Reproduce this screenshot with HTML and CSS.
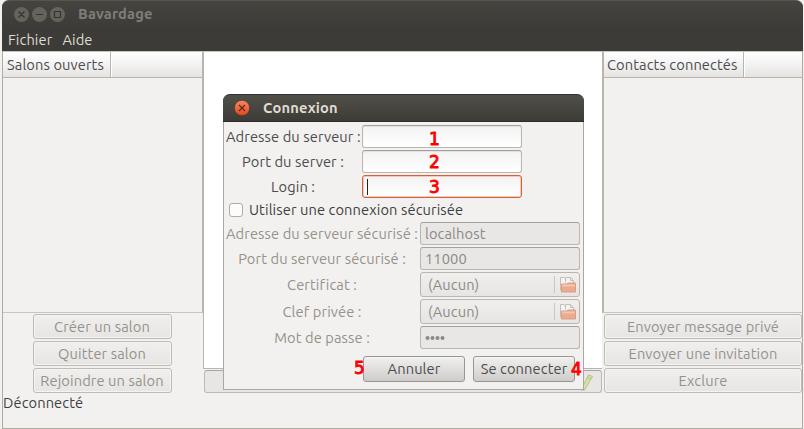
FILE: index.html
```html
<!DOCTYPE html>
<html lang="fr">
<head>
<meta charset="utf-8">
<title>Bavardage</title>
<link rel="stylesheet" href="styles.css">
</head>
<body>
<div class="window">
  <header class="top">
    <div class="titlebar">
      <svg class="controls" width="52" height="16" viewBox="0 0 52 16">
        <g fill="#65635b"><circle cx="7.500" cy="7.500" r="7.500"/><circle cx="25.500" cy="7.500" r="7.500"/><circle cx="43.500" cy="7.500" r="7.500"/></g>
        <g fill="none" stroke="#35342f" stroke-width="1.200"><path d="M4.500 4.500l6 6M10.500 4.500l-6 6M22 7.500h7"/><path d="M40.500 4.500h6v6h-6z"/></g>
      </svg>
      <span class="title">Bavardage</span>
    </div>
    <nav class="menu"><span>Fichier</span><span>Aide</span></nav>
  </header>
  <main class="body">
    <section class="side left">
      <div class="list">
        <div class="head"><span class="col salons">Salons ouverts</span><span class="rest"></span></div>
      </div>
      <div class="actions">
        <button disabled>Créer un salon</button>
        <button disabled>Quitter salon</button>
        <button disabled>Rejoindre un salon</button>
      </div>
    </section>
    <section class="center">
      <div class="chat"></div>
      <div class="entry">
        <svg width="16" height="18" viewBox="0 0 16 18"><path d="M1 17L8.500 2l4 1.500L4.500 17z" fill="#d3e3a0" stroke="#b3bf8f"/><path d="M7.500 4.500l3.500 1.500" stroke="#b3bf8f"/></svg>
      </div>
    </section>
    <section class="side right">
      <div class="list">
        <div class="head"><span class="col contacts">Contacts connectés</span><span class="rest"></span></div>
      </div>
      <div class="actions">
        <button disabled>Envoyer message privé</button>
        <button disabled>Envoyer une invitation</button>
        <button disabled>Exclure</button>
      </div>
    </section>
  </main>
  <footer class="status">Déconnecté</footer>
</div>

<div class="dialog">
  <div class="dialog-title">
    <svg width="16" height="16" viewBox="0 0 16 16"><defs><linearGradient id="o" x2="0" y2="1"><stop stop-color="#f58a62"/><stop offset="1" stop-color="#e0481b"/></linearGradient></defs><circle cx="8" cy="8" r="7.700" fill="url(#o)" stroke="#33322e" stroke-width=".6"/><path d="M5 5l6 6M11 5l-6 6" stroke="#5b2413" stroke-width="1.100"/></svg>
    <span class="title">Connexion</span>
  </div>
  <div class="form">
    <div class="row plain"><label>Adresse du serveur :</label><div class="field"></div></div>
    <div class="row plain"><label>Port du server :</label><div class="field"></div></div>
    <div class="row plain"><label>Login :</label><div class="field focus"><i class="caret"></i></div></div>
    <div class="check"><i class="box"></i><span>Utiliser une connexion sécurisée</span></div>
    <div class="row secure"><label>Adresse du serveur sécurisé :</label><div class="field off">localhost</div></div>
    <div class="row secure"><label>Port du serveur sécurisé :</label><div class="field off">11000</div></div>
    <div class="row secure tall"><label>Certificat :</label><div class="file"><span>(Aucun)</span><svg width="18" height="18" viewBox="0 0 18 18"><path d="M1.500 14V1.500H5l2 2M6.500 6V1.500h5l3 3V7" fill="#f4f3f2" stroke="#c2c0bd"/><path d="M1.500 14.500h2M11.500 1.500v3h3" fill="none" stroke="#c2c0bd"/><path d="M2.500 16v-8h5.500l1-1h7.500v9z" fill="#ebab90" stroke="#dc9d82"/><path d="M3 9.500h13" stroke="#f3c5b1" stroke-width="2"/></svg></div></div>
    <div class="row secure tall"><label>Clef privée :</label><div class="file"><span>(Aucun)</span><svg width="18" height="18" viewBox="0 0 18 18"><path d="M1.500 14V1.500H5l2 2M6.500 6V1.500h5l3 3V7" fill="#f4f3f2" stroke="#c2c0bd"/><path d="M1.500 14.500h2M11.500 1.500v3h3" fill="none" stroke="#c2c0bd"/><path d="M2.500 16v-8h5.500l1-1h7.500v9z" fill="#ebab90" stroke="#dc9d82"/><path d="M3 9.500h13" stroke="#f3c5b1" stroke-width="2"/></svg></div></div>
    <div class="row secure"><label>Mot de passe :</label><div class="field off"><svg width="21" height="6" viewBox="0 0 21 6" fill="#8c8983"><circle cx="2.500" cy="3" r="2"/><circle cx="7.500" cy="3" r="2"/><circle cx="12.500" cy="3" r="2"/><circle cx="17.500" cy="3" r="2"/></svg></div></div>
    <div class="buttons"><button>Annuler</button><button>Se connecter</button></div>
  </div>
</div>
<span class="mark k1">1</span><span class="mark k2">2</span><span class="mark k3">3</span><span class="mark k4">4</span><span class="mark k5">5</span>
</body>
</html>
```
FILE: styles.css
```css
* { box-sizing: border-box; }
body { margin: 0; width: 804px; height: 429px; overflow: hidden; position: relative; background: #f2f1f0; font: 14.67px/18px Ubuntu, "Noto Sans", sans-serif; letter-spacing: .1px; color: #4c4c4c; padding-left: 2px; padding-right: 1px; white-space: nowrap; }
.window { height: 429px; background: #f2f1f0; display: flex; flex-direction: column; border: 1px solid #aeaba4; border-top: 0; border-radius: 7px 7px 0 0; }
.top { height: 51px; margin: 0 -1px; background: linear-gradient(#45443f, #3c3b37 28px); border-radius: 7px 7px 0 0; border-top: 1px solid #55544e; }
.titlebar { height: 27px; display: flex; align-items: center; padding-left: 12px; }
.title { font-weight: 700; letter-spacing: .2px; color: #807d78; margin-left: 12px; position: relative; top: -1px; }
.controls { display: block; }
.menu { display: flex; padding: 0 0 0 6px; gap: 10px; color: #dfdbd2; height: 23px; align-items: center; }
.body { display: flex; height: 343px; }
.side { width: 200px; display: flex; flex-direction: column; }
.list { height: 262px; border: 1px solid #c8c5c0; border-left: 0; border-right: 1px solid #b8b5ae; }
.right .list { border-left: 2px solid #b8b5ae; border-right: 0; }
.head { height: 26px; display: flex; background: linear-gradient(#fff, #f6f5f5 40%, #e5e4e3); border-bottom: 1px solid #b8b5ae; }
.col { border-right: 1px solid #b8b5ae; padding: 4px 0 0 4px; width: 108px; }
.contacts { width: 140px; padding-left: 3px; }
.rest { flex: 1; border-left: 1px solid #fff; }
.actions { display: flex; flex-direction: column; gap: 2px; padding-top: 1px; align-items: center; }
.left .actions { padding-right: 2px; }
.right .actions { align-items: stretch; padding-left: 2px; }
button { font: inherit; letter-spacing: inherit; margin: 0; padding: 1px 0 0; height: 25px; border: 1px solid #bebbb6; border-radius: 3px; color: #96928b; background: linear-gradient(#f0efee, #e6e5e4); box-shadow: inset 0 0 0 1px #f5f4f3; display: flex; align-items: center; justify-content: center; }
.left .actions button { width: 139px; }
.center { flex: 1; display: flex; flex-direction: column; }
.chat { height: 318px; background: #fff; border: 1px solid #b8b5ae; border-top-color: #c8c5c0; border-right: 0; }
.entry { margin: 1px 0 0 1px; height: 23px; border: 1px solid #bcb9b3; border-top-color: #a8a5a0; border-radius: 3px; background: #e8e6e4; display: flex; justify-content: flex-end; align-items: center; padding-right: 5px; }
.status { color: #3f3f3f; }
.dialog { position: absolute; left: 223px; top: 94px; width: 361px; height: 296px; background: #f2f1f0; border: 1px solid #aaa7a1; border-top: 0; border-radius: 7px 7px 0 0; }
.dialog-title { height: 28px; margin: 0 -1px; border-radius: 7px 7px 0 0; background: linear-gradient(#504f48, #3c3b37); border-top: 1px solid #33322e; border-bottom: 1px solid #2d2c29; display: flex; align-items: center; padding-left: 11px; }
.dialog-title .title { color: #dfdbd2; margin-left: 13px; top: 0; }
.form { padding: 3px 3px 0 2px; }
.row { display: flex; height: 23px; margin-bottom: 2px; }
.row label { width: 136px; text-align: center; padding: 3px 2px 0 0; }
.row.secure label { width: 194px; color: #96928b; }
.row.tall { height: 25px; }
.row.tall label { padding-top: 4px; }
.field, .file { width: 160px; border: 1px solid #b9b6b0; border-radius: 3px; display: flex; align-items: center; }
.field { background: linear-gradient(#f3f3f3, #fff); border-top-color: #a3a09b; box-shadow: inset 0 1px 1px #e4e2e0; }
.focus { border-color: #d0613c; box-shadow: inset 0 0 0 1px #f6c9b9; padding-left: 4px; }
.caret { width: 1px; height: 16px; background: #222; }
.off { background: #e8e7e5; color: #8c8983; padding-left: 4px; box-shadow: none; }
.file { padding: 0 2px 0 7px; justify-content: space-between; color: #8c8983; background: linear-gradient(#c9c7c3, #c9c7c3) 133px 50% / 1px 17px no-repeat, linear-gradient(#f0efee, #e6e5e4); }
.check { height: 20px; display: flex; align-items: center; margin: 0 0 2px 3px; color: #3f3f3f; }
.box { width: 14px; height: 14px; border: 1px solid #b0ada8; border-radius: 3px; background: #fcfcfc; margin-right: 6px; }
.buttons { display: flex; gap: 8px; justify-content: flex-end; padding: 5px 5px 0 0; }
.buttons button { width: 102px; height: 26px; padding: 0; border-color: #999690; color: #4c4c4c; background: linear-gradient(#f0f0ef, #cfcdcc); box-shadow: inset 0 1px #f6f5f4; }
.mark { position: absolute; font: 17px/18px "DejaVu Sans", sans-serif; color: #f00; -webkit-text-stroke: .9px #f00; }
.k1 { left: 429px; top: 130px; }
.k2 { left: 429px; top: 153px; }
.k3 { left: 429px; top: 178px; }
.k4 { left: 571px; top: 360px; }
.k5 { left: 354px; top: 359px; }
```
